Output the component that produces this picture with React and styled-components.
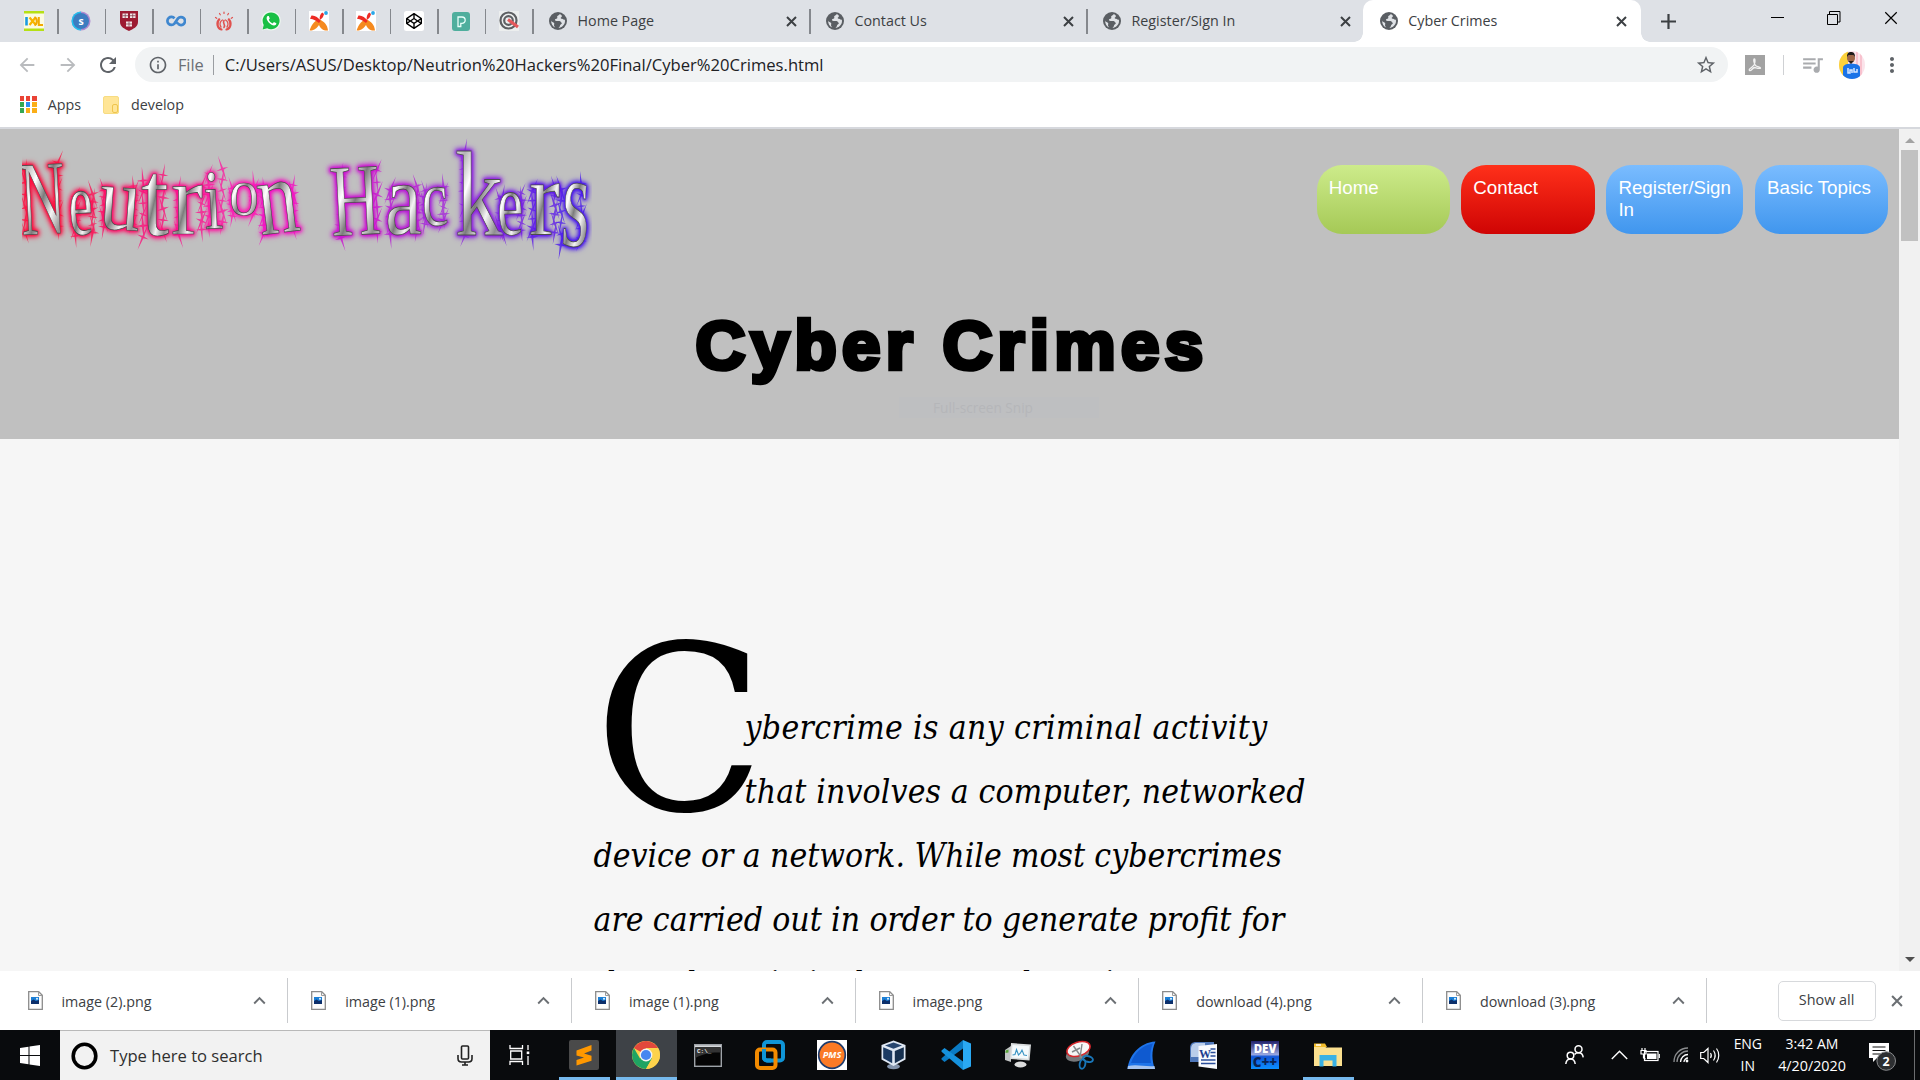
import React from "react";
import styled, { createGlobalStyle } from "styled-components";
import {
  MdArrowBack, MdArrowForward, MdRefresh, MdInfoOutline,
  MdStarBorder, MdQueueMusic, MdMoreVert,
} from "react-icons/md";
import { FaCodepen } from "react-icons/fa";

const GlobalStyle = createGlobalStyle`
  * { box-sizing: border-box; }
  html, body { margin: 0; padding: 0; overflow: hidden; }
  body { font-family: "Open Sans", "Noto Sans", sans-serif; background: #fff; }
  svg { display: block; flex: none; }
`;

const Screen = styled.div`
  width: 1920px;
  height: 1080px;
  display: flex;
  flex-direction: column;
  overflow: hidden;
`;

/* ---------- generic bits ---------- */
const Label = styled.span`
  font-size: ${(p) => p.$size || 14.3}px;
  letter-spacing: ${(p) => p.$ls || 0}px;
  color: ${(p) => p.$color || "#3c4043"};
  line-height: 20px;
  white-space: nowrap;
`;

const Cell = styled.div`
  width: ${(p) => p.$w}px;
  flex: none;
  height: 100%;
  display: flex;
  align-items: center;
  justify-content: center;
`;

/* ---------- tab strip ---------- */
const TabStrip = styled.div`
  height: 42px;
  flex: none;
  display: flex;
  background: #dee1e6;
  padding-left: 11px;
`;

const PinnedTab = styled.div`
  width: 47.5px;
  flex: none;
  display: flex;
  align-items: center;
  justify-content: space-between;
  padding-left: ${(p) => p.$pad}px;
`;

const Divider = styled.i`
  width: 1.3px;
  height: ${(p) => p.$h || 25}px;
  flex: none;
  background: ${(p) => p.$color || "#85888d"};
`;

const Tab = styled.div`
  width: ${(p) => (p.$active ? 278 : 277)}px;
  flex: none;
  display: flex;
  align-items: center;
  margin-left: ${(p) => (p.$active ? -1.5 : 0)}px;
  padding-left: ${(p) => (p.$active ? 16.8 : 15.5)}px;
  gap: 10.5px;
  position: relative;
  background: ${(p) => (p.$active ? "#fff" : "transparent")};
  border-radius: 10px 10px 0 0;
  ${Label} { flex: 1; }
  ${(p) =>
    p.$active &&
    `
    &::before, &::after {
      content: "";
      position: absolute;
      bottom: 0;
      width: 9px;
      height: 9px;
    }
    &::before { left: -9px; background: radial-gradient(circle at 0 0, transparent 8.5px, #fff 9px); }
    &::after { right: -9px; background: radial-gradient(circle at 100% 0, transparent 8.5px, #fff 9px); }
  `}
`;

const TabEnd = styled.div`
  display: flex;
  align-items: center;
  gap: 12.5px;
`;

const WindowButtons = styled.div`
  display: flex;
  margin: 0 0.5px 0 auto;
  height: 36px;
`;

/* ---------- toolbar ---------- */
const Toolbar = styled.div`
  height: 45px;
  flex: none;
  display: flex;
  align-items: center;
  background: #fff;
  padding-left: 7px;
  color: #5f6368;
`;

const Omnibox = styled.div`
  width: 1595.5px;
  height: 35px;
  margin-left: 7px;
  border-radius: 18px;
  background: #f1f3f4;
  display: flex;
  align-items: center;
  padding: 0 11px 0 13px;
`;

const UrlText = styled.div`
  display: flex;
  align-items: center;
  gap: 9px;
  margin-left: 10px;
  flex: 1;
  ${Label}:last-child { margin-left: 2px; }
`;

const BookmarkBar = styled.div`
  height: 42px;
  flex: none;
  display: flex;
  align-items: center;
  padding: 0 0 5px 19.5px;
  background: #fff;
  border-bottom: 2px solid #d6d8dd;
`;

const Bookmark = styled.div`
  display: flex;
  align-items: center;
  gap: ${(p) => p.$gap}px;
  margin-right: 22px;
`;

const AppGrid = styled.div`
  display: grid;
  grid-template-columns: repeat(3, 4.6px);
  gap: 1.7px;
`;

const Dot = styled.i`
  height: 4.6px;
  background: ${(p) => p.$c};
`;

const Folder = styled.div`
  width: 16px;
  height: 18px;
  border-radius: 2px;
  background: #ffe596;
  border: 1px solid #f7dc82;
  display: flex;
  align-items: flex-end;
  justify-content: flex-end;
  &::after {
    content: "";
    width: 4px;
    height: 7px;
    border-radius: 2px;
    border: 1px solid #efc54d;
  }
`;

/* ---------- web page ---------- */
const Viewport = styled.div`
  height: 842px;
  flex: none;
  display: flex;
`;

const Page = styled.main`
  width: 1899px;
  height: 842px;
  overflow: hidden;
  background: #f6f6f6;
`;

const Header = styled.header`
  height: 310px;
  background: #c0c0c0;
`;

const HeaderTop = styled.div`
  height: 150px;
  display: flex;
  justify-content: space-between;
  padding: 0 11px 0 0;
`;

const Nav = styled.nav`
  display: flex;
  gap: 11.6px;
  padding-top: 36px;
`;

const NavButton = styled.a`
  width: ${(p) => p.$w}px;
  height: 69px;
  border-radius: 25px;
  padding: 12px 0 0 12px;
  background: linear-gradient(to bottom, ${(p) => p.$from}, ${(p) => p.$to});
  color: #fff;
  font: 18.75px/22px "Liberation Sans", Arial, sans-serif;
`;

const Title = styled.h1`
  margin: 0;
  height: 110px;
  text-align: center;
  font: 700 69px/84px "Liberation Sans", Arial, sans-serif;
  letter-spacing: 5.35px;
  -webkit-text-stroke: 4.6px #000;
  color: #000;
  padding: 24.5px 0 0 5px;
`;

const SnipHint = styled.div`
  width: 200px;
  height: 21px;
  margin: 8px 0 0 899px;
  padding-right: 32px;
  background: #bebfc1;
  display: flex;
  align-items: center;
  justify-content: center;
`;

const Article = styled.article`
  margin: 257px 0 0 593.5px;
  width: 720px;
  font: italic 33.4px/64px "DejaVu Serif Condensed", "DejaVu Serif", serif;
  font-stretch: condensed;
  color: #000;
`;

const DropCap = styled.span`
  float: left;
  width: 151px;
  height: 128px;
  padding-top: 5px;
  font: normal 230px/60px "DejaVu Serif Condensed", "DejaVu Serif", serif;
  font-stretch: condensed;
  transform: scaleX(1.08);
  transform-origin: 0 0;
`;

const Line = styled.span`
  display: block;
  white-space: nowrap;
  word-spacing: ${(p) => p.$ws || 0}px;
  letter-spacing: ${(p) => p.$ls || 0}px;
`;

const Scrollbar = styled.div`
  width: 21px;
  background: #f1f1f1;
  display: flex;
  flex-direction: column;
  align-items: center;
  padding: 9px 0 9px;
`;

const Arrow = styled.i`
  border: 5px solid transparent;
  border-top-width: ${(p) => (p.$down ? 5 : 0)}px;
  border-bottom-width: ${(p) => (p.$down ? 0 : 5)}px;
  border-${(p) => (p.$down ? "top" : "bottom")}-color: ${(p) => (p.$down ? "#505050" : "#a3a3a3")};
`;

const Thumb = styled.i`
  width: 17px;
  height: 91px;
  margin: 7px 0 auto;
  background: #c1c1c1;
`;

/* ---------- downloads ---------- */
const DownloadBar = styled.div`
  height: 59px;
  flex: none;
  display: flex;
  align-items: center;
  background: #fff;
`;

const DownloadItem = styled.div`
  width: 283.7px;
  height: 45px;
  margin-left: ${(p) => (p.$first ? 4.5 : 0)}px;
  flex: none;
  display: flex;
  align-items: center;
  padding: 0 21px 0 23px;
  border-right: 1.3px solid #c9cbce;
  ${Label} { flex: 1; margin: 2px 0 0 19px; }
`;

const ShowAll = styled.div`
  width: 98px;
  height: 40px;
  margin: 0 13.5px 0 71px;
  border: 1px solid #d7d9dc;
  border-radius: 5px;
  display: flex;
  align-items: center;
  justify-content: center;
  padding-bottom: 2px;
`;

/* ---------- taskbar ---------- */
const Taskbar = styled.footer`
  height: 50px;
  flex: none;
  display: flex;
  background: #090b0d;
  color: #fff;
`;

const SearchBox = styled.div`
  width: 430px;
  background: #f2f2f2;
  border-top: 1px solid #b9b9b9;
  display: flex;
  align-items: center;
  padding: 0 17.5px 0 11px;
  ${Label} { flex: 1; margin-left: 12px; }
`;

const TaskIcon = styled.div`
  width: 61.95px;
  flex: none;
  display: flex;
  align-items: center;
  justify-content: center;
`;

const RunningIcon = styled(TaskIcon)`
  width: ${(p) => p.$w}px;
  margin: 0 ${(p) => p.$mr}px 0 ${(p) => p.$ml}px;
  background: ${(p) => (p.$active ? "#3e4247" : "transparent")};
  box-shadow: inset 0 -3px 0 #76b9ed;
`;

const Tray = styled.div`
  margin-left: auto;
  display: flex;
  align-items: center;
`;

const Stack = styled.div`
  width: ${(p) => p.$w}px;
  display: flex;
  flex-direction: column;
  align-items: center;
  gap: 2.5px;
`;

const ShowDesktop = styled.div`
  width: 6px;
  height: 100%;
  border-left: 1px solid #6b6d6f;
`;

/* ---------- drawings ---------- */
const Favicon = ({ kind }) => {
  switch (kind) {
    case "ixl":
      return (
        <svg width="20" height="20">
          <rect width="20" height="20" fill="#fbfbe0" />
          <rect width="20" height="2.5" fill="#b5e014" />
          <rect y="17.5" width="20" height="2.5" fill="#b5e014" />
          <path d="M2.500 6v8.500" stroke="#1b9be0" strokeWidth="2.600" />
          <path d="M5.500 6.500l6.500 7.500M11.500 6.500l-6 7.500" stroke="#f7b500" strokeWidth="2.200" />
          <path d="M10.500 6.200c3 1 3 7 0 8M14.800 6v8H19" fill="none" stroke="#f2a900" strokeWidth="2" />
        </svg>
      );
    case "s":
      return (
        <svg width="20" height="20">
          <circle cx="10" cy="10" r="9.500" fill="#b08ad0" />
          <path d="M10 .5a9.500 9.500 0 0 0 0 19z" fill="#1fc3ee" />
          <circle cx="10" cy="10" r="8" fill="#3d7cc0" />
          <text x="10" y="14" fontSize="10.500" fontWeight="700" textAnchor="middle" fill="#fff" fontFamily="Open Sans">s</text>
        </svg>
      );
    case "shield":
      return (
        <svg width="18" height="20">
          <path d="M0 0h18v11c0 5-5 7-9 9-4-2-9-4-9-9z" fill="#9d1b32" />
          <g fill="#f3e6e8">
            <rect x="2.500" y="2.500" width="5.500" height="4.500" />
            <rect x="10" y="2.500" width="5.500" height="4.500" />
            <rect x="6" y="10.500" width="6" height="5" />
          </g>
          <path d="M5.200 2.500v4.500M12.700 2.500v4.500M9 10.500v5M2.500 4.700h13M6 13h6" stroke="#7b3040" strokeWidth=".7" />
        </svg>
      );
    case "coursera":
      return (
        <svg width="20" height="20" fill="none" stroke="#3f87cf" strokeWidth="2.700">
          <path d="M8.500 7.400A4 4 0 1 0 8.400 12.600L12 7.400a4 4 0 1 1 .3 5.600M12.200 13l-1.400-1.700" />
        </svg>
      );
    case "flame":
      return (
        <svg width="20" height="20" fill="none" stroke="#e0524f" strokeWidth="2.200" strokeLinecap="round">
          <path d="M7.500 18.500C3.500 17.500 2 12 5.200 8.300M12.500 18.500c4-1 5.500-6.500 2.300-10.200" />
          <path d="M7 16c-2-2.500-.8-6 1.500-7M13 16c2-2.500.8-6-1.500-7" strokeWidth="1.300" />
          <path d="M10 9.500c-2 3 2 3 0 7" strokeWidth="1.600" />
          <path d="M10 1v1.500M5.500 2.500l.8 1.300M14.500 2.500l-.8 1.300M1.500 6.500l1.200.8M18.500 6.500l-1.200.8" strokeWidth="1.200" />
        </svg>
      );
    case "whatsapp":
      return (
        <svg width="20" height="20">
          <circle cx="10" cy="9.800" r="9.800" fill="#eef8f0" />
          <path d="M.8 19.500l1.600-5.200 4 4z" fill="#eef8f0" />
          <path d="M10 1.400a8.400 8.400 0 0 0-7.300 12.500L1.600 18.400l4.600-1.200A8.400 8.400 0 1 0 10 1.400z" fill="#19c045" />
          <path d="M6.600 5c-1 .8-1.400 2.400-.4 4.200 1.500 2.800 4 4.900 6.800 5.300 1.200 0 2.300-.8 2.400-2.200l-2.500-1.300-1.200 1.400c-1.900-.8-3.100-2-3.900-3.700l1-1.300L7.800 5z" fill="#fff" />
        </svg>
      );
    case "x":
      return (
        <svg width="20" height="20">
          <rect width="20" height="20" fill="#fff" />
          <path d="M10.500 8.500C6 9 3 13 .5 19.500c4.500.5 7.500-2.500 9.500-5.500 1.500 3.500 4.500 6 9 5.500-.5-6-4-9-8.500-11z" fill="#f58a1f" />
          <path d="M2.500 4.500c3.500-.3 7 2 9 5.500l-1.500 2C7 10 5 8 1 7.800zM10.800 9c-.5-3.500.5-6 2.500-7.500l1.700 1.500c-.5 2.500-1.700 4.500-4.200 6z" fill="#ee2b24" />
          <circle cx="17" cy="2" r="1.900" fill="#2aa7e8" />
        </svg>
      );
    case "codepen":
      return (
        <svg width="20" height="20">
          <rect width="20" height="20" rx="2.500" fill="#fff" />
          <FaCodepen x="2" y="2" size={16} color="#000" />
        </svg>
      );
    case "p":
      return (
        <svg width="18" height="19">
          <rect width="18" height="19" rx="3" fill="#4fae9d" />
          <path d="M6 14.500V5h4a3.200 3.200 0 0 1 0 6.400H8.800v3.100z" fill="none" stroke="#e9fffa" strokeWidth="1.300" />
        </svg>
      );
    default:
      return (
        <svg width="20" height="20" fill="none">
          <rect width="20" height="20" fill="#eceeee" />
          <circle cx="9.500" cy="9.500" r="8" stroke="#5d5f62" strokeWidth="2.200" />
          <circle cx="9.500" cy="9.500" r="4.300" stroke="#5d5f62" strokeWidth="2.200" />
          <path d="M9 8.500l10 7.500" stroke="#e4575a" strokeWidth="3.200" />
        </svg>
      );
  }
};

const Globe = () => (
  <svg width="18" height="18" viewBox="0 0 18 18">
    <circle cx="9" cy="9" r="9" fill="#5a5e63" />
    <path d="M10.800 1.900c-.5 1.400-1.900 1.300-2.600 2.400-.3 1.100.7 1.600-.2 2.300-.8.500-2 .2-2.100 1.500.3 1.200 2.900.8 4.600 1 1.300.2 1.400 1.500 2.400 1.900-.1 1.300-1.600 1.200-1.800 2.300-.2 1-.6 1.900-1.600 2.600 3.200-.3 6.500-2.900 6.500-6.900 0-.6-.1-1-.2-1.500-.9.500-1.400-.2-2.100-.6-.7-.3-1.900.2-2-.8 0-.9 1.200-1.200 1.200-2.200 0-.8-1-1.400-2.100-2z" fill="#dfe2e6" />
    <path d="M2.200 8.500c.2 1.900 2.400 1.500 3 2.800.3 1-.5 1.500 0 2.700.2.700.8 1 1.100 1.500C3.500 14.500 1.900 11.600 2.200 8.500z" fill="#dfe2e6" />
  </svg>
);

const CloseX = ({ size = 11, color = "#3c4043", w = 2 }) => (
  <svg width={size} height={size} viewBox="0 0 11 11">
    <path d="M1 1l9 9M10 1l-9 9" stroke={color} strokeWidth={w} />
  </svg>
);

/* One record per letter: glyph, x, baseline, drawn width, drawn height, em width, em height, tilt, glow */
const letters = [
  ["N", 22, 112, 45, 70, 0.722, 0.662, -3, "#ff0a3c"],
  ["e", 70, 112, 24, 42, 0.444, 0.459, -3, "#ff0a50"],
  ["u", 98, 105, 41, 41, 0.5, 0.45, 4, "#ff0a64"],
  ["t", 141, 112, 28, 62, 0.278, 0.579, 0, "#ff0a78"],
  ["r", 171, 111, 32, 48, 0.333, 0.459, 0, "#ff0a8c"],
  ["i", 205, 106, 19, 58, 0.278, 0.683, -3, "#ff14a0"],
  ["o", 229, 92, 30, 31, 0.5, 0.459, 0, "#ff14b4"],
  ["n", 261, 112, 41, 49, 0.5, 0.459, -7, "#f50ac3"],
  ["H", 332, 113, 50, 68, 0.722, 0.662, -3, "#cd0ad2"],
  ["a", 385, 111, 37, 48, 0.444, 0.459, 0, "#b914d7"],
  ["c", 423, 103, 26, 37, 0.444, 0.459, -3, "#a51edc"],
  ["k", 455, 112, 48, 83, 0.5, 0.683, 0, "#8c1ee1"],
  ["e", 498, 112, 26, 41, 0.444, 0.459, -2, "#7319e6"],
  ["r", 529, 112, 31, 50, 0.333, 0.459, 0, "#5a14eb"],
  ["s", 560, 122, 28, 61, 0.389, 0.459, 3, "#4614f0"],
];

const LogoSvg = styled.svg`
  width: 600px;
  height: 150px;
  margin-top: -6px;
`;

const Glyph = styled.text`
  font: 100px "Liberation Serif", "Times New Roman", serif;
  fill: url(#chrome-metal);
  stroke: #4c4c4c;
  stroke-width: 0.7px;
  vector-effect: non-scaling-stroke;
`;

const GlowLetter = styled.g`
  filter: drop-shadow(0 0 1px ${(p) => p.$glow}) drop-shadow(0 0 2.5px ${(p) => p.$glow}) drop-shadow(0 0 2px ${(p) => p.$glow});
`;

const spark = (x, y, r, a) => {
  const pts = [];
  for (let i = 0; i < 8; i++) {
    const q = i % 2 ? r * 0.1 : r * (i % 4 ? 0.45 : 1);
    const t = a + (i * Math.PI) / 4;
    pts.push(`${(x + q * Math.cos(t)).toFixed(1)},${(y + q * Math.sin(t)).toFixed(1)}`);
  }
  return pts.join(" ");
};

/* Sparks sit on both stems of a letter; the upper half of "k" only has its left one. */
const sparksOf = ([ch, x, y, w, h], i) =>
  Array.from({ length: 12 }, (_, k) => {
    const right = k % 2 && !(ch === "k" && k > 5);
    const px = x + (right ? w * 0.86 : w * 0.14) + ((k * 7 + i * 5) % 7) - 3;
    const py = y - (h * k) / 11 + ((k * 5 + i * 3) % 5) - 2;
    return spark(px, py, 11 + ((k * 3 + i) % 5), 1.25 + ((k + i) % 4) * 0.24);
  });

const Logo = () => (
  <LogoSvg viewBox="0 0 600 150">
    <defs>
      <linearGradient id="chrome-metal" x1="0" y1="0" x2="1" y2="1">
        <stop offset="0" stopColor="#fff" />
        <stop offset=".2" stopColor="#b4b4b4" />
        <stop offset=".35" stopColor="#fff" />
        <stop offset=".5" stopColor="#7c7c7c" />
        <stop offset=".65" stopColor="#f4f4f4" />
        <stop offset=".8" stopColor="#909090" />
        <stop offset="1" stopColor="#fff" />
      </linearGradient>
      <clipPath id="logo-edge"><rect x="22" y="0" width="570" height="150" /></clipPath>
    </defs>
    <g clipPath="url(#logo-edge)">
      {letters.map((rec, i) => (
        <g key={"s" + i} fill={rec[8]} opacity=".75">
          {sparksOf(rec, i).map((pts, k) => <polygon key={k} points={pts} />)}
        </g>
      ))}
      {letters.map(([ch, x, y, w, h, ew, eh, tilt, glow], i) => (
        <GlowLetter key={i} $glow={glow}>
          <Glyph transform={`translate(${x} ${y}) rotate(${tilt}) scale(${w / (ew * 100)} ${h / (eh * 100)})`}>{ch}</Glyph>
        </GlowLetter>
      ))}
    </g>
  </LogoSvg>
);

const FileIcon = () => (
  <svg width="15" height="19" viewBox="0 0 15 19">
    <path d="M.7.7h10l3.600 3.600v14H.7z" fill="#fdfdfd" stroke="#8b8b8b" strokeWidth="1.300" />
    <path d="M10.500.7v3.800h3.800" fill="none" stroke="#9b9b9b" />
    <rect x="3" y="6" width="8" height="7" fill="#1c7fd6" />
    <path d="M3 13v-3l2.500-1.500L8 10l3-1v4z" fill="#0c2f6b" />
    <circle cx="9" cy="7.700" r="1" fill="#e8f6ff" />
  </svg>
);

const Caret = () => (
  <svg width="13" height="9" viewBox="0 0 13 9">
    <path d="M1.200 7.500l5.300-5.500 5.300 5.500" fill="none" stroke="#6b6f73" strokeWidth="1.900" />
  </svg>
);

const AppIcon = ({ kind }) => {
  switch (kind) {
    case "sublime":
      return (
        <svg width="30" height="30">
          <rect width="30" height="30" rx="2" fill="#4a4a4a" />
          <path d="M7.500 10.500L22.500 5v5.500l-7.500 3 7.500 2.200v5L7.500 25.500V20l7.500-2.500-7.500-2z" fill="#ff9800" />
        </svg>
      );
    case "chrome":
      return (
        <svg width="28" height="28" viewBox="0 0 28 28">
          <circle cx="14" cy="14" r="14" fill="#fdd24b" />
          <path d="M14 14L1.900 7A14 14 0 0 1 26.100 7H14z" fill="#e2483c" />
          <path d="M1.900 7A14 14 0 0 0 14 28l6-10.500L14 14 8 17.500z" fill="#1fa463" />
          <path d="M14 28a14 14 0 0 0 12.100-21H14l6 10.500z" fill="#fdd24b" />
          <circle cx="14" cy="14" r="6.400" fill="#f4f4f4" />
          <circle cx="14" cy="14" r="5.100" fill="#4686f0" />
        </svg>
      );
    case "cmd":
      return (
        <svg width="28" height="23">
          <rect x=".7" y=".7" width="26.600" height="21.600" fill="#050505" stroke="#9ea3a8" strokeWidth="1.400" />
          <path d="M1 2.200h26" stroke="#d6d9dc" strokeWidth="2" />
          <path d="M1.400 3.500h25v5C17 8 8 10 1.400 14z" fill="#333" />
          <text x="3" y="9" fontSize="6" fontWeight="700" fill="#eee" fontFamily="Liberation Mono">C:\_</text>
        </svg>
      );
    case "vmware":
      return (
        <svg width="30" height="30" fill="none" strokeWidth="4">
          <rect x="9" y="2" width="19" height="18.500" rx="3" stroke="#0f95d7" />
          <rect x="2" y="9.500" width="18.500" height="18.500" rx="3" stroke="#f38b00" />
          <path d="M9 9v8.500a3 3 0 0 0 3 3h4" stroke="#0f95d7" />
        </svg>
      );
    case "pms":
      return (
        <svg width="30" height="30">
          <rect width="30" height="30" fill="#fff" />
          <circle cx="15" cy="15" r="13.300" fill="#fb7a26" stroke="#1d3c6e" strokeWidth="1.700" />
          <text x="15" y="18.200" fontSize="9.200" fontStyle="italic" fontWeight="700" textAnchor="middle" fill="#fff" fontFamily="Open Sans">PMS</text>
        </svg>
      );
    case "vbox":
      return (
        <svg width="26" height="30">
          <ellipse cx="12.500" cy="26.500" rx="6.500" ry="2.800" fill="#8495ad" />
          <path d="M12.500 .5L24.500 5v14.500L12.500 26 .5 19.500V5z" fill="#dfe8f3" />
          <path d="M12.500 2.500l8.500 3L12.500 8.800 4 5.500z" fill="#27466f" />
          <path d="M2.200 7.300l9 3.700v12.300l-9-5z" fill="#1c3b63" />
          <path d="M22.800 7.300l-9 3.700v12.300l9-5z" fill="#16304f" />
        </svg>
      );
    case "vscode":
      return (
        <svg width="30" height="30">
          <path d="M22 0l8 3.500v23L22 30z" fill="#2aa9f3" />
          <path d="M22 0v8.500L3.500 22 .5 19.500v-1.200z" fill="#0a7bc4" />
          <path d="M22 30v-8.500L3.500 8 .5 10.500v1.200z" fill="#1591dc" />
        </svg>
      );
    case "monitor":
      return (
        <svg width="28" height="26">
          <path d="M1 8l6-4v16l-6-2z" fill="#c3c6c6" />
          <path d="M1.500 8.500l3-1v3l-3 .5z" fill="#5ba53c" />
          <path d="M7 1l20 1.500-1.500 16L6 17z" fill="#d9dcdd" />
          <path d="M8.500 3l16.700 1.200-1.300 12.500L7.500 15.500z" fill="#f5fafc" />
          <path d="M8.500 13l2.500-.5 1.500-5 2 5.500 2-2 1.500-3 2 5 3 .5" fill="none" stroke="#3a94c4" strokeWidth="1.100" />
          <ellipse cx="16.500" cy="22.500" rx="6" ry="3" fill="#dcdddd" />
        </svg>
      );
    case "snip":
      return (
        <svg width="29" height="30">
          <ellipse cx="12.500" cy="14" rx="12" ry="7" transform="rotate(-18 12.500 14)" fill="#77787a" />
          <ellipse cx="13.500" cy="9" rx="12" ry="6.800" transform="rotate(-18 13.500 9)" fill="#f6f6f6" stroke="#d8262b" strokeWidth="1.500" />
          <path d="M8.500 6l8.500 12M17 4l-2 14M7 12l8-4" stroke="#85888a" strokeWidth="1.400" />
          <ellipse cx="17.500" cy="24" rx="2.800" ry="4.800" transform="rotate(12 17.500 24)" fill="none" stroke="#1976b8" strokeWidth="1.900" />
          <ellipse cx="23" cy="19" rx="5" ry="2.800" transform="rotate(14 23 19)" fill="none" stroke="#1976b8" strokeWidth="1.900" />
        </svg>
      );
    case "shark":
      return (
        <svg width="29" height="29">
          <path d="M.5 28C2 15 12 1.500 28.500.5 24 10 25 20 28 28z" fill="#1e74ea" />
          <path d="M4 22C8 11 15 4.500 26 2.500c-3 7-3 13-2 19.500z" fill="#0f5ad0" />
          <path d="M1 25c9-2 18 1 26.500 0l.5 3H.5z" fill="#a8c4ee" />
        </svg>
      );
    case "word":
      return (
        <svg width="29" height="29">
          <path d="M7 1h18v20H1V7c0-4 2-6 6-6z" fill="#4d76b8" />
          <path d="M8 2h8v14H2V8c0-4 2-6 6-6z" fill="#b9cdea" />
          <path d="M9.500 5L28 3v25L9.500 25.500z" fill="#f8fafd" />
          <path d="M21.500 8h5M21.500 11.500h5M21.500 15h5M12 19h14.500M12 22.500h14.500" stroke="#2b4f9b" strokeWidth="1.700" />
          <text x="10" y="16.500" fontSize="12" fontWeight="700" fill="#1f3f8f" fontFamily="Liberation Serif">W</text>
        </svg>
      );
    case "dev":
      return (
        <svg width="28" height="28">
          <defs>
            <linearGradient id="dev-fill" x1="0" y1="0" x2="0" y2="1">
              <stop offset="0" stopColor="#20206a" />
              <stop offset=".48" stopColor="#9aa8e0" />
              <stop offset=".56" stopColor="#1056d8" />
              <stop offset="1" stopColor="#0b90ff" />
            </linearGradient>
          </defs>
          <rect width="28" height="28" fill="url(#dev-fill)" />
          <text x="14" y="12" fontSize="11.500" fontWeight="800" textAnchor="middle" fill="#fff" fontFamily="Open Sans">DEV</text>
          <text x="14" y="26" fontSize="13.500" fontWeight="800" textAnchor="middle" fill="#0a2456" fontFamily="Open Sans">C++</text>
        </svg>
      );
    default:
      return (
        <svg width="28" height="24">
          <path d="M0 2h10l2 2.500h16V23H0z" fill="#fbe08f" />
          <path d="M0 .5h11l2 3.500H0z" fill="#f2bd2c" />
          <path d="M2 2h5" stroke="#fff" strokeWidth="1.500" />
          <path d="M5.500 23.500V12h17v11.500h-4v-6h-9v6z" fill="#39b1e5" />
        </svg>
      );
  }
};

const pinned = ["ixl", "s", "shield", "coursera", "flame", "whatsapp", "x", "x", "codepen", "p", "q"];
const tabs = ["Home Page", "Contact Us", "Register/Sign In"];
const appDots = ["#ea4335", "#ea4335", "#ea4335", "#34a853", "#2d8cf0", "#fbae17", "#34a853", "#fbae17", "#fbae17"];
const downloads = ["image (2).png", "image (1).png", "image (1).png", "image.png", "download (4).png", "download (3).png"];
const pinnedApps = ["cmd", "vmware", "pms", "vbox", "vscode", "monitor", "snip", "shark", "word", "dev"];

export default function App() {
  return (
    <Screen>
      <GlobalStyle />
      <TabStrip>
        {pinned.map((k, i) => (
          <PinnedTab key={i} $pad={k === "shield" ? 13.5 : k === "p" ? 13 : 12.7}>
            <Favicon kind={k} />
            <Divider />
          </PinnedTab>
        ))}
        {tabs.map((t, i) => (
          <Tab key={t}>
            <Globe />
            <Label>{t}</Label>
            <TabEnd>
              <CloseX />
              {i < 2 ? <Divider $h={25} /> : <Cell $w={1.3} />}
            </TabEnd>
          </Tab>
        ))}
        <Tab $active>
          <Globe />
          <Label>Cyber Crimes</Label>
          <TabEnd>
            <CloseX />
            <Cell $w={2} />
          </TabEnd>
        </Tab>
        <Cell $w={55}>
          <svg width="15" height="15"><path d="M7.500 0v15M0 7.500h15" stroke="#3c4043" strokeWidth="2.200" /></svg>
        </Cell>
        <WindowButtons>
          <Cell $w={57}><svg width="13" height="4"><path d="M0 1.500h13" stroke="#000" /></svg></Cell>
          <Cell $w={57}>
            <svg width="14" height="14" fill="none" stroke="#000"><path d="M.5 3.500h10v10H.5zM2.500 3.500v-3h10.500v10.500h-2.500" /></svg>
          </Cell>
          <Cell $w={57}><CloseX size={14} color="#000" w={0.9} /></Cell>
        </WindowButtons>
      </TabStrip>

      <Toolbar>
        <Cell $w={40}><MdArrowBack size={22} color="#b9bbbe" /></Cell>
        <Cell $w={41}><MdArrowForward size={22} color="#b9bbbe" /></Cell>
        <Cell $w={40}><MdRefresh size={24} color="#5f6368" /></Cell>
        <Omnibox>
          <MdInfoOutline size={20} />
          <UrlText>
            <Label $size={16.4} $ls={-0.1} $color="#6b6f74">File</Label>
            <Divider $h={20} $color="#9a9da1" />
            <Label $size={16.6} $color="#202124">C:/Users/ASUS/Desktop/Neutrion%20Hackers%20Final/Cyber%20Crimes.html</Label>
          </UrlText>
          <MdStarBorder size={22} />
        </Omnibox>
        <Cell $w={55}>
          <svg width="20" height="20">
            <rect width="20" height="20" fill="#a2a2a2" />
            <path d="M4.500 15.500c-1.500-1.500 3-3 4.500-5.500 1.500-3 1-6 .5-6-1.500 0-.5 4.500 1 6.500 1.500 1.500 5 1.500 5 2.500 0 1-3.500 0-6-.5-2 .5-3.500 4-5 3z" fill="none" stroke="#f2f2f2" strokeWidth="1.300" />
          </svg>
        </Cell>
        <Divider $h={20} $color="#cfd1d4" />
        <Cell $w={56}><MdQueueMusic size={25} color="#a9abae" /></Cell>
        <Cell $w={24}>
          <svg width="26" height="28" viewBox="0 0 26 28">
            <defs><clipPath id="avatar-edge"><ellipse cx="13" cy="14" rx="13" ry="14" /></clipPath></defs>
            <g clipPath="url(#avatar-edge)">
              <rect width="26" height="28" fill="#fbe3ea" />
              <rect width="9" height="28" fill="#fbd13a" />
              <path d="M18 0v28M22 0v28" stroke="#f7b7c5" strokeWidth="1.500" />
              <path d="M4 28V17c0-3 3-4 8-4.500 6 .5 9 1.500 9 4.500v11z" fill="#1a73e8" />
              <circle cx="12" cy="7" r="4" fill="#9c6547" />
              <path d="M8 6c0-4 1.500-5 4-5s4 1 4 5l-1.500-2h-5z" fill="#1d1a1a" />
              <path d="M9 10h6l-3 3z" fill="#2c211c" />
              <path d="M9 17v5h2v-3h2v3M15 17v4h3v-3" fill="none" stroke="#d7e8ff" strokeWidth="1.500" />
            </g>
          </svg>
        </Cell>
        <Cell $w={56}><MdMoreVert size={24} /></Cell>
      </Toolbar>

      <BookmarkBar>
        <Bookmark $gap={11}>
          <AppGrid>{appDots.map((c, i) => <Dot key={i} $c={c} />)}</AppGrid>
          <Label>Apps</Label>
        </Bookmark>
        <Bookmark $gap={12}>
          <Folder />
          <Label>develop</Label>
        </Bookmark>
      </BookmarkBar>

      <Viewport>
        <Page>
          <Header>
            <HeaderTop>
              <Logo />
              <Nav>
                <NavButton $w={133} $from="#cdeb8b" $to="#a5c956">Home</NavButton>
                <NavButton $w={133.5} $from="#ff301a" $to="#cf0404">Contact</NavButton>
                <NavButton $w={137} $from="#7abcff" $to="#4096ee">Register/Sign<br />In</NavButton>
                <NavButton $w={133} $from="#7abcff" $to="#4096ee">Basic Topics</NavButton>
              </Nav>
            </HeaderTop>
            <Title>Cyber Crimes</Title>
            <SnipHint>
              <Label $size={13.6} $color="#b5b6b9">Full-screen Snip</Label>
            </SnipHint>
          </Header>
          <Article>
            <DropCap>C</DropCap>
            <Line $ls={0.37}>ybercrime is any criminal activity</Line>
            <Line $ls={0.15}>that involves a computer, networked</Line>
            <Line $ws={-0.2}>device or a network. While most cybercrimes</Line>
            <Line $ws={-0.2}>are carried out in order to generate profit for</Line>
            <Line>the cybercriminals, some cybercrimes</Line>
          </Article>
        </Page>
        <Scrollbar>
          <Arrow />
          <Thumb />
          <Arrow $down />
        </Scrollbar>
      </Viewport>

      <DownloadBar>
        {downloads.map((d, i) => (
          <DownloadItem key={i} $first={i === 0}>
            <FileIcon />
            <Label>{d}</Label>
            <Caret />
          </DownloadItem>
        ))}
        <ShowAll><Label $size={14.4}>Show all</Label></ShowAll>
        <Cell $w={16}><CloseX size={12} color="#6b6f73" w={1.9} /></Cell>
      </DownloadBar>

      <Taskbar>
        <Cell $w={60}>
          <svg width="20" height="21" fill="#fff">
            <path d="M0 3l8.500-1.300v8.300H0zM9.500 1.500L20 0v10H9.500zM0 11h8.500v8.300L0 18zM9.500 11H20v10L9.500 19.500z" />
          </svg>
        </Cell>
        <SearchBox>
          <svg width="27" height="28"><ellipse cx="13.500" cy="14" rx="11.300" ry="11.800" fill="none" stroke="#000" strokeWidth="3.600" /></svg>
          <Label $size={16.6} $color="#2f2f2f">Type here to search</Label>
          <svg width="16" height="21" fill="none" stroke="#222" strokeWidth="1.600">
            <rect x="4.500" y="1" width="7" height="13" rx="1" />
            <path d="M1 10v3.500c0 2 1.500 3.500 3.500 3.500h7c2 0 3.500-1.500 3.500-3.500V10M8 17v3M5 20h6" />
          </svg>
        </SearchBox>
        <Cell $w={59}>
          <svg width="21" height="20" fill="none" stroke="#fff" strokeWidth="1.300">
            <path d="M1 0v3.500h12.500V0M1 20v-3.500h12.500V20M1.700 6h11v8h-11zM19 0v5M19 11v9" />
            <rect x="17.700" y="6.500" width="2.600" height="2.600" fill="#fff" stroke="none" />
          </svg>
        </Cell>
        <RunningIcon $w={51} $ml={9.6} $mr={6.3}><AppIcon kind="sublime" /></RunningIcon>
        <RunningIcon $w={61} $ml={0} $mr={0} $active><AppIcon kind="chrome" /></RunningIcon>
        {pinnedApps.map((k) => <TaskIcon key={k}><AppIcon kind={k} /></TaskIcon>)}
        <RunningIcon $w={51} $ml={6.5} $mr={0}><AppIcon kind="explorer" /></RunningIcon>
        <Tray>
          <Cell $w={46}>
            <svg width="19" height="20" fill="none" stroke="#fff" strokeWidth="1.500">
              <circle cx="13.500" cy="4.300" r="3.500" />
              <circle cx="5.500" cy="10.500" r="3.300" />
              <path d="M.8 19c.3-3 2-5 4.700-5s4.400 2 4.700 5M9.500 9.500c1-1.300 2.300-1.700 4-1.700 2.700 0 4.400 2 4.700 4.500" />
            </svg>
          </Cell>
          <Cell $w={44}>
            <svg width="17" height="10"><path d="M.8 9L8.500 1.200 16.200 9" fill="none" stroke="#fff" strokeWidth="1.400" /></svg>
          </Cell>
          <Cell $w={17}>
            <svg width="20" height="14" fill="none" stroke="#fff">
              <rect x="4.500" y="3.500" width="13.500" height="9" strokeWidth="1.200" />
              <rect x="7" y="5.500" width="9.500" height="5.500" fill="#fff" stroke="none" />
              <path d="M19.300 6v4M1 2.500h5v3.500H1zM2 0v2M5 0v2M3.500 6v4l2 1" strokeWidth="1.200" />
            </svg>
          </Cell>
          <Cell $w={44}>
            <svg width="16" height="16" fill="none" strokeWidth="1.300">
              <path d="M1 15C1 7 7 1 15 1M4 15C4 9 9 4 15 4" stroke="#8b8d8f" />
              <path d="M7.500 15c0-4 3.500-7.500 7.500-7.500M11 15c0-2 2-4 4-4" stroke="#fff" />
              <circle cx="14" cy="14" r="1.400" fill="#fff" />
            </svg>
          </Cell>
          <Cell $w={15}>
            <svg width="21" height="17" fill="none" stroke="#fff" strokeWidth="1.200">
              <path d="M.7 5.500h3L8 1.500v14l-4.300-4h-3z" />
              <path d="M10.500 6c1 1.500 1 3.500 0 5M13.500 3.500c2 3 2 7 0 10M16.500 1.500c3 4 3 10 0 14" />
            </svg>
          </Cell>
          <Stack $w={60.5}>
            <Label $size={14} $color="#fff" $ls={-0.1}>ENG</Label>
            <Label $size={14} $color="#fff">IN</Label>
          </Stack>
          <Stack $w={68}>
            <Label $size={14} $color="#fff">3:42 AM</Label>
            <Label $size={14.3} $color="#fff">4/20/2020</Label>
          </Stack>
          <Cell $w={68}>
            <svg width="32" height="32" viewBox="-3 0 32 32">
              <path d="M2 4h20v15H10l-4 4v-4H2z" fill="#fff" />
              <path d="M5.500 8h13M5.500 11.500h13M5.500 15h8" stroke="#111" strokeWidth="1.200" />
              <circle cx="19.200" cy="22" r="9.300" fill="#2d2f31" stroke="#8a8c8e" />
              <text x="19.200" y="26.500" fontSize="12.500" fontWeight="700" textAnchor="middle" fill="#fff" fontFamily="Open Sans">2</text>
            </svg>
          </Cell>
          <ShowDesktop />
        </Tray>
      </Taskbar>
    </Screen>
  );
}
